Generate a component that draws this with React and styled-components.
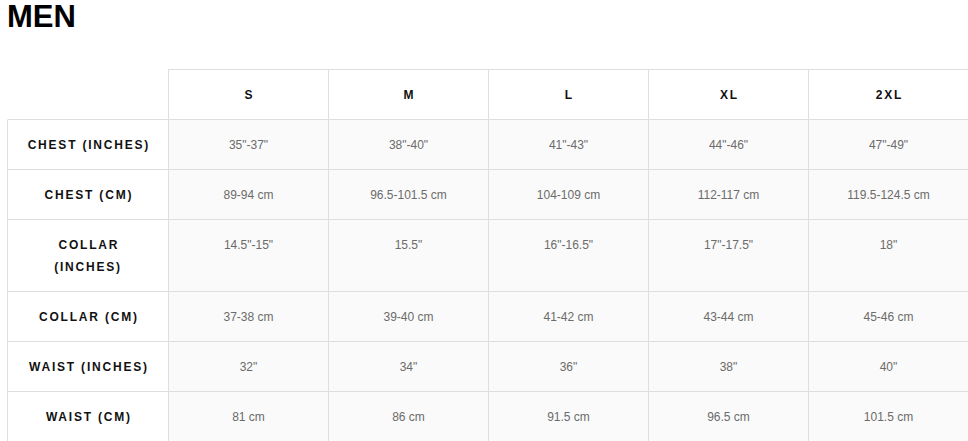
import React from 'react';
import styled, { createGlobalStyle } from 'styled-components';

const GlobalStyle = createGlobalStyle`
  html, body {
    margin: 0;
    padding: 0;
    overflow: hidden;
    background: #fff;
  }
  body {
    padding: 0 0 0 7px;
    font-family: "Liberation Sans", Arial, sans-serif;
  }
`;

const Title = styled.h1`
  margin: 0;
  font-size: 31px;
  line-height: 34px;
  font-weight: 700;
  color: #000;
`;

const Table = styled.table`
  margin-top: 35px;
  border-collapse: separate;
  border-spacing: 0;
  table-layout: fixed;
  width: 962px;
`;

const Cell = styled.td`
  box-sizing: border-box;
  width: 160px;
  padding: 14px 6px 13px;
  line-height: 22px;
  font-size: 12px;
  text-align: center;
  vertical-align: top;
  color: #6b6b6b;
  background: #fafafa;
  border-right: 1px solid #dedede;
  border-bottom: 1px solid #dedede;
`;

const HeadCell = styled.th`
  box-sizing: border-box;
  width: 160px;
  padding: 14px 6px 13px;
  line-height: 22px;
  font-size: 12px;
  font-weight: 700;
  letter-spacing: 1.8px;
  text-indent: 1.8px;
  text-align: center;
  vertical-align: top;
  color: #111;
  background: #fff;
  border-top: 1px solid #dedede;
  border-right: 1px solid #dedede;
  border-bottom: 1px solid #dedede;
`;

const Corner = styled.th`
  box-sizing: border-box;
  width: 162px;
  background: #fff;
  border-left: 1px solid transparent;
  border-right: 1px solid #dedede;
  border-bottom: 1px solid #dedede;
`;

const Label = styled.th`
  box-sizing: border-box;
  width: 162px;
  padding: 14px 16px 13px;
  line-height: 22px;
  font-size: 12px;
  font-weight: 700;
  letter-spacing: 1.8px;
  text-indent: 1.8px;
  text-align: center;
  vertical-align: top;
  color: #111;
  background: #fff;
  border-left: 1px solid #dedede;
  border-right: 1px solid #dedede;
  border-bottom: 1px solid #dedede;
`;

const sizes = ['S', 'M', 'L', 'XL', '2XL'];

const rows = [
  { label: 'CHEST (INCHES)', values: ['35"-37"', '38"-40"', '41"-43"', '44"-46"', '47"-49"'] },
  { label: 'CHEST (CM)', values: ['89-94 cm', '96.5-101.5 cm', '104-109 cm', '112-117 cm', '119.5-124.5 cm'] },
  { label: 'COLLAR (INCHES)', values: ['14.5"-15"', '15.5"', '16"-16.5"', '17"-17.5"', '18"'] },
  { label: 'COLLAR (CM)', values: ['37-38 cm', '39-40 cm', '41-42 cm', '43-44 cm', '45-46 cm'] },
  { label: 'WAIST (INCHES)', values: ['32"', '34"', '36"', '38"', '40"'] },
  { label: 'WAIST (CM)', values: ['81 cm', '86 cm', '91.5 cm', '96.5 cm', '101.5 cm'] },
];

export default function App() {
  return (
    <>
      <GlobalStyle />
      <Title>MEN</Title>
      <Table>
        <thead>
          <tr>
            <Corner />
            {sizes.map(size => (
              <HeadCell key={size}>{size}</HeadCell>
            ))}
          </tr>
        </thead>
        <tbody>
          {rows.map(row => (
            <tr key={row.label}>
              <Label scope="row">{row.label}</Label>
              {row.values.map((value, i) => (
                <Cell key={sizes[i]}>{value}</Cell>
              ))}
            </tr>
          ))}
        </tbody>
      </Table>
    </>
  );
}
